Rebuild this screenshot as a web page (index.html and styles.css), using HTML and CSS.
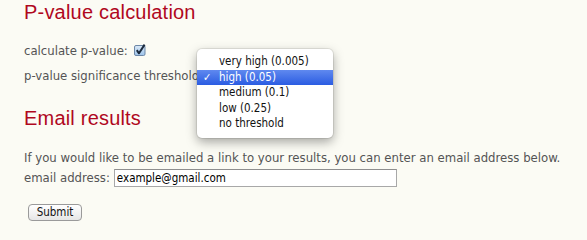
FILE: index.html
```html
<!DOCTYPE html>
<html>
<head>
<meta charset="utf-8">
<link rel="stylesheet" href="styles.css">
</head>
<body>
<div class="page">
  <h2 class="title">P-value calculation</h2>
  <div class="row">calculate p-value: <svg class="check" width="12" height="12" viewBox="0 0 12 12"><defs><linearGradient id="cb" x1="0" y1="0" x2="0" y2="1"><stop offset="0" stop-color="#dbe9f7"/><stop offset="1" stop-color="#9cc3ea"/></linearGradient></defs><rect x="0.5" y="1.5" width="10.5" height="10" rx="1.5" fill="url(#cb)" stroke="#6d87a6"/><path d="M2.8 6.2 L5 9.3 L10.6 0.6" fill="none" stroke="#1b2a3d" stroke-width="2" stroke-linejoin="round"/></svg></div>
  <div class="row">p-value significance threshold:<span class="sel-slot"></span></div>
  <h2 class="title second">Email results</h2>
  <p class="para">If you would like to be emailed a link to your results, you can enter an email address below.</p>
  <div class="email-row"><span>email address:</span><input class="email" type="text" value="example@gmail.com"></div>
  <button class="submit">Submit</button>
</div>
<div class="menu">
  <div class="item">very high (0.005)</div>
  <div class="item selected"><span class="tick">✓</span>high (0.05)</div>
  <div class="item">medium (0.1)</div>
  <div class="item">low (0.25)</div>
  <div class="item">no threshold</div>
</div>
</body>
</html>
```
FILE: styles.css
```css
html, body {
  margin: 0;
  padding: 0;
  background: #fbfbf4;
}
.page {
  padding: 0 0 0 24px;
  font-family: "DejaVu Sans Condensed", "DejaVu Sans", sans-serif;
  font-stretch: condensed;
  font-size: 13px;
  color: #545454;
}
.title {
  margin: 0;
  font-family: "Liberation Sans", Arial, sans-serif;
  font-weight: normal;
  font-size: 20px;
  line-height: 24px;
  letter-spacing: 0.2px;
  color: #b0081e;
}
.title + .row {
  margin-top: 14px;
}
.row {
  line-height: 25px;
  height: 25px;
  white-space: nowrap;
}
.check {
  margin-left: 2px;
  vertical-align: -1px;
}
.sel-slot {
  display: inline-block;
  width: 100px;
}
.second {
  margin-top: 18px;
}
.para {
  margin: 17.5px 0 0 0;
  line-height: 20px;
}
.email-row {
  display: flex;
  align-items: center;
  height: 20px;
  line-height: 20px;
}
.email {
  margin-left: 4px;
  width: 283px;
  height: 18px;
  box-sizing: border-box;
  border: 1px solid #a8a8a8;
  border-top-color: #8e8e8e;
  background: #fff;
  padding: 0 2px;
  font-family: "DejaVu Sans Condensed", "DejaVu Sans", sans-serif;
  font-stretch: condensed;
  font-size: 11.5px;
  color: #000;
  outline: none;
}
.submit {
  display: block;
  margin: 16px 0 0 4px;
  width: 54px;
  height: 17px;
  padding: 0;
  border: 1px solid #9a9a9a;
  border-radius: 4px;
  background: linear-gradient(#ffffff, #e6e6e6);
  font-family: "DejaVu Sans Condensed", "DejaVu Sans", sans-serif;
  font-stretch: condensed;
  font-size: 11.5px;
  color: #111;
  line-height: 15px;
}
.menu {
  position: absolute;
  left: 197px;
  top: 49px;
  width: 136px;
  height: 89px;
  box-sizing: border-box;
  padding-top: 5px;
  background: #ffffff;
  border-radius: 5px;
  box-shadow: 0 4px 11px rgba(0, 0, 0, 0.35), 0 0 0 1px rgba(0, 0, 0, 0.08);
  font-family: "DejaVu Sans Condensed", "DejaVu Sans", sans-serif;
  font-stretch: condensed;
  font-size: 11.5px;
  color: #111;
}
.item {
  position: relative;
  height: 15.5px;
  line-height: 15.5px;
  padding-left: 22px;
  white-space: nowrap;
}
.selected {
  background: linear-gradient(#5f89ef, #2b5ce2);
  color: #fff;
}
.tick {
  position: absolute;
  left: 6px;
  top: 0;
  font-size: 11px;
}
```
